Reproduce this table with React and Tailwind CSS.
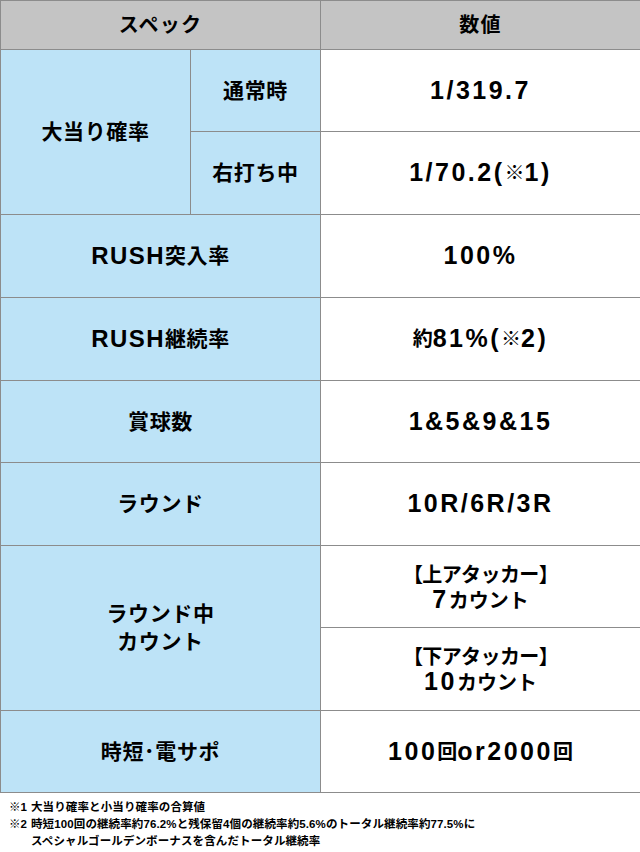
import React from 'react';

const font = "font-['Liberation_Sans','Noto_Sans_CJK_JP',sans-serif]";

const Cell = ({ className = '', children }) => (
  <div className={`flex items-center justify-center text-center ${className}`}>{children}</div>
);

const Label = ({ className = '', children }) => (
  <Cell className={`bg-[#bde3f7] text-[21px] font-bold tracking-[0.03em] ${className}`}>{children}</Cell>
);

const Value = ({ className = '', children }) => (
  <Cell className={`bg-white text-[25px] font-bold tracking-[0.1em] ${className}`}>{children}</Cell>
);

// japanese part inside a value cell (smaller than the latin digits)
const J = ({ children }) => <span className="text-[20px] tracking-normal">{children}</span>;

export default function App() {
  return (
    <div className={`w-[640px] h-[852px] bg-white text-black ${font}`}>
      <div className="grid grid-cols-[189px_129px_319px] grid-rows-[48px_81px_82px_82px_82px_81px_82px_81px_82px_81px] gap-px p-px bg-[#8c8c8c]">
        {/* header */}
        <Cell className="col-span-2 bg-[#c4c4c4] text-[20px] font-bold tracking-[0.06em]">スペック</Cell>
        <Cell className="bg-[#c4c4c4] text-[20px] font-bold tracking-[0.06em]">数値</Cell>

        <Label className="row-span-2">大当り確率</Label>
        <Label>通常時</Label>
        <Value>1/319.7</Value>
        <Label>右打ち中</Label>
        <Value>1/70.2(<J>※</J>1)</Value>

        <Label className="col-span-2">
          <span className="text-[24px] tracking-[0.06em]">RUSH</span>突入率
        </Label>
        <Value>100%</Value>

        <Label className="col-span-2">
          <span className="text-[24px] tracking-[0.06em]">RUSH</span>継続率
        </Label>
        <Value><J>約</J>81%(<J>※</J>2)</Value>

        <Label className="col-span-2">賞球数</Label>
        <Value>1&amp;5&amp;9&amp;15</Value>

        <Label className="col-span-2">ラウンド</Label>
        <Value>10R/6R/3R</Value>

        <Label className="col-span-2 row-span-2 leading-[28px]">
          <div>ラウンド中<br />カウント</div>
        </Label>
        <Value className="leading-[24px]">
          <div>
            <span className="text-[20px] tracking-[-0.03em]">【上アタッカー】</span>
            <br />
            7<J>カウント</J>
          </div>
        </Value>
        <Value className="leading-[24px]">
          <div>
            <span className="text-[20px] tracking-[-0.03em]">【下アタッカー】</span>
            <br />
            10<J>カウント</J>
          </div>
        </Value>

        <Label className="col-span-2">時短･電サポ</Label>
        <Value>100<J>回</J>or2000<J>回</J></Value>
      </div>

      {/* notes */}
      <div className="px-[9px] pt-[6px] text-[11.5px] font-bold leading-[17px] tracking-[0.01em]">
        <div className="flex">
          <span className="w-[22px] shrink-0">※1</span>
          <span>大当り確率と小当り確率の合算値</span>
        </div>
        <div className="flex">
          <span className="w-[22px] shrink-0">※2</span>
          <span>
            時短100回の継続率約76.2%と残保留4個の継続率約5.6%のトータル継続率約77.5%に
            <br />
            スペシャルゴールデンボーナスを含んだトータル継続率
          </span>
        </div>
      </div>
    </div>
  );
}
